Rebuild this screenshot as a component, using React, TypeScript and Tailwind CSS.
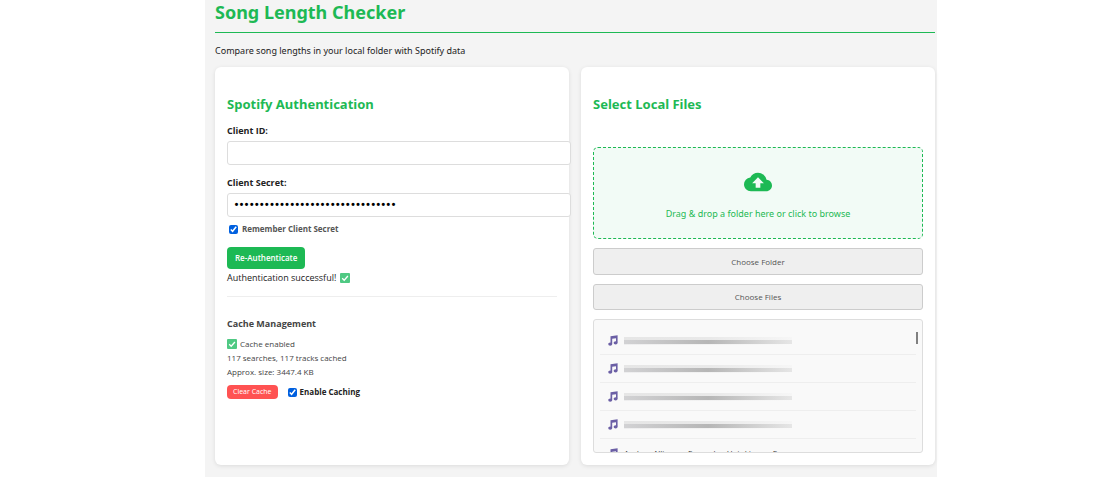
import { useState } from "react";

const tracks = ["track-1", "track-2", "track-3", "track-4"];

const inputClass =
  "mt-1 block h-6 w-[calc(100%+14px)] rounded-[3px] border border-[#dddddd] bg-white px-1.5 font-[Roboto,sans-serif] text-[15px] text-black outline-none focus:border-[#1db954]";

const pickerClass =
  "block w-full rounded-[3px] border border-[#cccccc] bg-[#efefef] text-center text-[8px] text-[#555555] hover:bg-[#e5e5e5]";

function Card({ title, children }: { title: string; children: React.ReactNode }) {
  return (
    <section className="min-w-0 flex-1 rounded-md bg-white px-3 pt-7 pb-3 shadow-[0_1px_4px_rgba(0,0,0,0.1)]">
      <h2 className="font-['Noto_Sans',sans-serif] text-[13px] leading-[18px] font-bold text-[#1db954]">{title}</h2>
      {children}
    </section>
  );
}

function CheckMark({ className = "" }: { className?: string }) {
  return (
    <svg viewBox="0 0 10 10" className={`inline-block size-2.5 shrink-0 ${className}`} aria-hidden="true">
      <rect width="10" height="10" rx="1" fill="#4fc983" />
      <path d="M2.2 5.3 4.2 7.2 7.9 3" fill="none" stroke="#fff" strokeWidth="1.3" />
    </svg>
  );
}

function CloudUpload() {
  return (
    <svg viewBox="0 0 24 16" className="h-5 w-7" aria-hidden="true">
      <path
        fill="#1db954"
        d="M19.35 6.04A7.49 7.49 0 0 0 12 0C9.11 0 6.6 1.64 5.35 4.04A5.994 5.994 0 0 0 0 10c0 3.31 2.69 6 6 6h13c2.76 0 5-2.24 5-5 0-2.64-2.05-4.78-4.65-4.96zM14 9v4h-4V9H7l5-5 5 5h-3z"
      />
    </svg>
  );
}

function MusicNote() {
  return (
    <svg viewBox="0 0 10 11" className="h-[11px] w-2.5 shrink-0" aria-hidden="true">
      <path fill="#6b5fa5" d="M2.5 1.3 9.6.2v7.2H8V3.2l-3.8.6v5.4H2.5z" />
      <ellipse cx="2.2" cy="9.1" rx="2" ry="1.6" fill="#6b5fa5" />
      <ellipse cx="7.6" cy="7.8" rx="2" ry="1.6" fill="#6b5fa5" />
    </svg>
  );
}

// Redacted track name, a smeared grey bar that fades to the right
function HiddenName() {
  return (
    <span className="flex w-[168px] flex-col">
      <span className="h-[3px] bg-linear-to-r from-[#e6e6e6] via-[#e9e9e9] to-[#f6f6f6]" />
      <span className="h-1 bg-linear-to-r from-[#d2d2d4] via-[#b6b6b6] to-[#e6e6e6]" />
      <span className="h-px bg-linear-to-r from-[#eeeeef] via-[#f2f2f2] to-[#f9f9f9]" />
    </span>
  );
}

function AuthCard() {
  const [clientId, setClientId] = useState("");
  const [secret, setSecret] = useState("0123456789abcdef0123456789abcdef");

  return (
    <Card title="Spotify Authentication">
      <label htmlFor="client-id" className="mt-3 block text-[9px] leading-3 font-bold">
        Client ID:
      </label>
      <input id="client-id" type="text" value={clientId} onChange={(e) => setClientId(e.target.value)} className={inputClass} />
      <label htmlFor="client-secret" className="mt-3 block text-[9px] leading-3 font-bold">
        Client Secret:
      </label>
      <input
        id="client-secret"
        type="password"
        value={secret}
        onChange={(e) => setSecret(e.target.value)}
        className={inputClass}
      />
      <label className="mt-1.5 ml-0.5 flex items-center gap-1 text-[8px] leading-3 font-bold text-[#555555]">
        <input type="checkbox" defaultChecked className="size-[9px] accent-[#0060df]" />
        Remember Client Secret
      </label>
      <button type="button" className="mt-3 h-[22px] rounded-sm bg-[#1db954] px-2 text-[8px] font-semibold text-white">
        Re-Authenticate
      </button>
      <p className="mt-0.5 flex items-center gap-1 text-[9px] leading-[13px]">
        Authentication successful! <CheckMark />
      </p>
      <hr className="mt-3 border-[#eeeeee]" />

      <h3 className="mt-5 text-[9px] leading-[14px] font-bold text-[#444444]">Cache Management</h3>
      <div className="mt-1.5 text-[8px] leading-[14px] text-[#444444]">
        <p className="flex items-center gap-[3px]">
          <CheckMark /> Cache enabled
        </p>
        <p>117 searches, 117 tracks cached</p>
        <p>Approx. size: 3447.4 KB</p>
      </div>
      <div className="mt-1.5 flex items-center gap-2.5">
        <button type="button" className="h-3.5 rounded-sm bg-[#ff5252] px-1.5 text-[7px] leading-3 text-white">
          Clear Cache
        </button>
        <label className="flex items-center gap-[3px] text-[8px] leading-3 font-bold">
          <input type="checkbox" defaultChecked className="size-[9px] accent-[#0060df]" />
          Enable Caching
        </label>
      </div>
    </Card>
  );
}

function FilesCard() {
  return (
    <Card title="Select Local Files">
      <button
        type="button"
        className="mt-[34px] flex h-[92px] w-full flex-col items-center justify-center gap-3.5 rounded-[5px] border border-dashed border-[#1db954] bg-[#f2fbf6] pt-2 font-['Noto_Sans',sans-serif] text-[9px] leading-4 text-[#1db954]"
      >
        <CloudUpload />
        Drag &amp; drop a folder here or click to browse
      </button>
      <button type="button" className={`mt-[9px] h-[27px] ${pickerClass}`}>
        Choose Folder
      </button>
      <button type="button" className={`mt-[9px] h-[26px] ${pickerClass}`}>
        Choose Files
      </button>
      <div className="relative mt-[9px] h-[134px] overflow-hidden rounded-[3px] border border-[#dddddd] bg-[#f9f9f9] px-1.5 pt-[7px]">
        <ul>
          {tracks.map((id) => (
            <li key={id} className="flex h-7 items-center gap-1.5 border-b border-[#eeeeee] px-2">
              <MusicNote />
              <HiddenName />
            </li>
          ))}
          <li className="flex h-7 items-center gap-1.5 px-2 text-[8px] text-[#333333]">
            <MusicNote />
            Andrea Allinger - Example - Hotel tune - F
          </li>
        </ul>
        <span className="absolute top-3 right-1 h-3 w-0.5 bg-[#808080]" />
      </div>
    </Card>
  );
}

export default function App() {
  return (
    <div className="min-h-screen bg-white pr-[183px] pl-[205px] font-['Open_Sans',sans-serif] text-[#222222]">
      <main className="min-h-screen bg-[#f4f4f4] pr-0.5 pb-3 pl-2.5">
        <h1 className="border-b border-[#1db954] pb-2 font-['Noto_Sans',sans-serif] text-[18px] leading-6 font-bold text-[#1db954]">
          Song Length Checker
        </h1>
        <p className="mt-2.5 font-['Noto_Sans',sans-serif] text-[9px] leading-4">
          Compare song lengths in your local folder with Spotify data
        </p>
        <div className="mt-2 flex gap-3">
          <AuthCard />
          <FilesCard />
        </div>
      </main>
    </div>
  );
}
